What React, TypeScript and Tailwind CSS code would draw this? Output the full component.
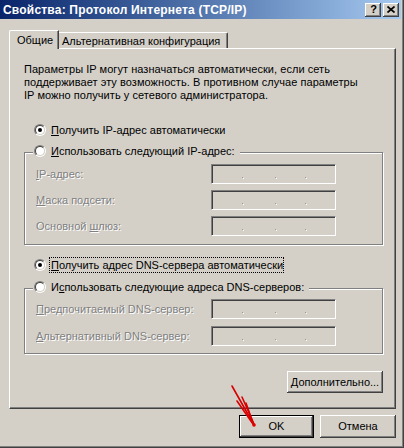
import React from "react";

function Radio({ checked }: { checked?: boolean }) {
  return (
    <span className="flex h-[12px] w-[12px] shrink-0 items-center justify-center rounded-full border border-t-[#808080] border-l-[#808080] border-b-white border-r-white">
      <span className="flex h-[10px] w-[10px] items-center justify-center rounded-full border border-t-[#404040] border-l-[#404040] border-b-[#d4d0c8] border-r-[#d4d0c8] bg-white">
        {checked && <span className="h-[4px] w-[4px] rounded-full bg-black" />}
      </span>
    </span>
  );
}

function IpBox() {
  return (
    <div className="flex h-[20px] w-[125px] items-end border border-t-[#808080] border-l-[#808080] border-b-white border-r-white bg-[#d4d0c8] pb-[5px] shadow-[inset_1px_1px_0_#404040]">
      <span className="ml-[30px] h-[1px] w-[1px] bg-[#9a9a9a] shadow-[1px_1px_0_#fff]" />
      <span className="ml-[32px] h-[1px] w-[1px] bg-[#9a9a9a] shadow-[1px_1px_0_#fff]" />
      <span className="ml-[29px] h-[1px] w-[1px] bg-[#9a9a9a] shadow-[1px_1px_0_#fff]" />
    </div>
  );
}

function Field({ label }: { label: React.ReactNode }) {
  return (
    <div className="flex h-[20px] items-center pl-[11px]">
      <span className="w-[175px] text-[#808080] [text-shadow:1px_1px_0_#fff]">{label}</span>
      <IpBox />
    </div>
  );
}

export default function App() {
  return (
    <div className="relative h-[448px] w-[404px] overflow-hidden bg-[#d4d0c8] font-['Liberation_Sans',Arial,sans-serif] text-[11px] leading-[13px] text-black shadow-[inset_-1px_-1px_0_#404040,inset_-2px_-2px_0_#808080]">
      {/* title bar */}
      <div className="flex h-[19px] w-[401px] items-center bg-linear-to-r from-[#0a246a] to-[#a6caf0] pl-[3px] pr-[2px]">
        <span className="flex-1 text-[12px] font-bold leading-none tracking-[0.2px] text-white">
          Свойства: Протокол Интернета (TCP/IP)
        </span>
        <div className="flex h-[14px] w-[16px] items-center justify-center bg-[#d4d0c8] pl-[1px] text-[11px] font-bold leading-none shadow-[inset_-1px_-1px_0_#404040,inset_1px_1px_0_#fff,inset_-2px_-2px_0_#808080]">
          ?
        </div>
        <div className="ml-[2px] flex h-[14px] w-[16px] items-center justify-center bg-[#d4d0c8] shadow-[inset_-1px_-1px_0_#404040,inset_1px_1px_0_#fff,inset_-2px_-2px_0_#808080]">
          <svg width="8" height="7" viewBox="0 0 8 7">
            <path d="M0.5 0.5L7.5 6.5M7.5 0.5L0.5 6.5" stroke="#000" strokeWidth="1.7" />
          </svg>
        </div>
      </div>

      {/* tabs */}
      <div className="mt-[11px] flex h-[18px] items-end pl-[9px]">
        <div className="relative z-10 -mb-px h-[19px] w-[50px] rounded-tl-[2px] border-t border-l border-r border-t-white border-l-white border-r-[#404040] bg-[#d4d0c8] pl-[7px] pt-[3px] shadow-[inset_-1px_0_0_#808080]">
          Общие
        </div>
        <div className="h-[16px] w-[169px] rounded-tr-[2px] border-t border-r border-t-white border-r-[#404040] pl-[3px] pt-[2px] shadow-[inset_-1px_0_0_#808080]">
          Альтернативная конфигурация
        </div>
      </div>

      {/* panel */}
      <div className="ml-[9px] flex h-[361px] w-[387px] flex-col border border-t-white border-l-white border-r-[#404040] border-b-[#404040] pl-[14px] pr-[12px] pt-[14px] shadow-[inset_-1px_-1px_0_#808080]">
        <p className="tracking-[0.05px]">
          Параметры IP могут назначаться автоматически, если сеть
          <br />
          поддерживает эту возможность. В противном случае параметры
          <br />
          IP можно получить у сетевого администратора.
        </p>

        <div className="mt-[21px] flex h-[14px] items-center pl-[10px]">
          <Radio checked />
          <span className="ml-[5px]">
            <u>П</u>олучить IP-адрес автоматически
          </span>
        </div>

        <div className="mt-[15px] h-[93px] border border-[#808080] pb-[6px] shadow-[inset_1px_1px_0_#fff,1px_1px_0_#fff]">
          <div className="-mt-[9px] ml-[8px] flex h-[14px] w-fit items-center bg-[#d4d0c8] pl-[1px] pr-[5px]">
            <Radio />
            <span className="ml-[5px]">
              <u>И</u>спользовать следующий IP-адрес:
            </span>
          </div>
          <div className="mt-[6px] flex flex-col gap-[6px]">
            <Field label={<><u>I</u>P-адрес:</>} />
            <Field label={<><u>М</u>аска подсети:</>} />
            <Field label={<>Основной <u>ш</u>люз:</>} />
          </div>
        </div>

        <div className="mt-[13px] flex h-[14px] items-center pl-[10px]">
          <Radio checked />
          <span className="ml-[4px] flex h-[14px] items-center pl-[1px] outline-1 outline-dotted outline-black">
            <span>
              <u>П</u>олучить адрес DNS-сервера автоматически
            </span>
          </span>
        </div>

        <div className="mt-[16px] h-[66px] border border-[#808080] shadow-[inset_1px_1px_0_#fff,1px_1px_0_#fff]">
          <div className="-mt-[9px] ml-[8px] flex h-[14px] w-fit items-center bg-[#d4d0c8] pl-[1px] pr-[5px]">
            <Radio />
            <span className="ml-[5px]">
              И<u>с</u>пользовать следующие адреса DNS-серверов:
            </span>
          </div>
          <div className="mt-[5px] flex flex-col gap-[7px]">
            <Field label={<><u>П</u>редпочитаемый DNS-сервер:</>} />
            <Field label={<><u>А</u>льтернативный DNS-сервер:</>} />
          </div>
        </div>

        <div className="mt-[17px] flex h-[22px] w-[96px] items-center justify-center self-end bg-[#d4d0c8] shadow-[inset_-1px_-1px_0_#404040,inset_1px_1px_0_#fff,inset_-2px_-2px_0_#808080]">
          <span>
            <u>Д</u>ополнительно...
          </span>
        </div>
      </div>

      {/* dialog buttons */}
      <div className="mt-[6px] flex justify-end gap-[6px] pr-[8px]">
        <div className="flex h-[23px] w-[75px] items-center justify-center border border-black shadow-[inset_-1px_-1px_0_#404040,inset_1px_1px_0_#fff,inset_-2px_-2px_0_#808080]">
          OK
        </div>
        <div className="flex h-[23px] w-[76px] items-center justify-center shadow-[inset_-1px_-1px_0_#404040,inset_1px_1px_0_#fff,inset_-2px_-2px_0_#808080]">
          Отмена
        </div>
      </div>

      {/* red arrow drawn over the screenshot */}
      <svg className="pointer-events-none absolute left-0 top-0" width="404" height="448">
        <g stroke="#d80000" strokeWidth="1.6" strokeLinecap="round" fill="none">
          <path d="M232 386L254 425" />
          <path d="M237 401L253 424" />
          <path d="M242 397L254 424" />
          <path d="M246 403L253 423" />
        </g>
        <circle cx="254" cy="425" r="1.8" fill="#e00000" />
      </svg>
    </div>
  );
}
